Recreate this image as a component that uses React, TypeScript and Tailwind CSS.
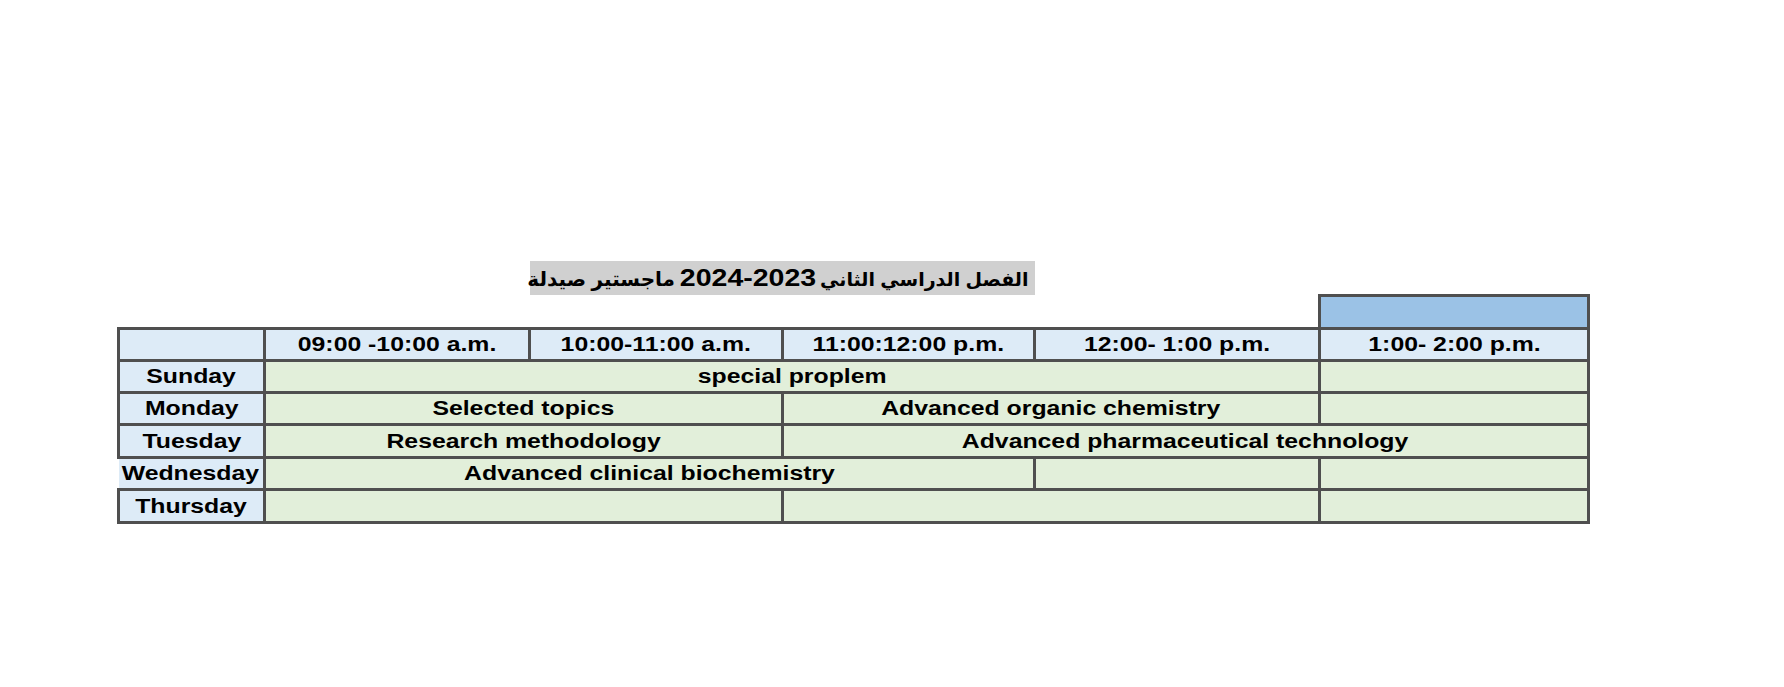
const border = "border-[3px] border-[#4f4f4f]";
const day = `${border} bg-[#ddebf7] text-center`;
const cell = `${border} bg-[#e2efda] text-center`;
const head = `${border} bg-[#ddebf7] text-center`;

function Txt({ children }: { children?: React.ReactNode }) {
  return <span className="inline-block scale-x-[1.24] whitespace-nowrap">{children}</span>;
}

const hours = ["09:00 -10:00 a.m.", "10:00-11:00 a.m.", "11:00:12:00 p.m.", "12:00- 1:00 p.m.", "1:00- 2:00 p.m."];

export default function App() {
  return (
    <div className="min-h-[687px] w-[1784px] bg-white pl-[117px] pt-[261px] font-['Liberation_Sans','DejaVu_Sans',sans-serif] text-[20px] font-bold text-black">
      <table className="w-[1470px] table-fixed border-collapse">
        <colgroup>
          <col className="w-[146px]" />
          <col className="w-[265px]" />
          <col className="w-[253px]" />
          <col className="w-[252px]" />
          <col className="w-[285px]" />
          <col className="w-[269px]" />
        </colgroup>
        <tbody>
          <tr className="h-[34px]">
            <td />
            <td />
            <td colSpan={2} className="overflow-visible bg-[#d0d0d0] p-0">
              <div dir="rtl" className="h-[34px] whitespace-nowrap pr-[6px] text-right leading-[34px]">
                <span className="text-[19px]">الفصل الدراسي الثاني</span>{" "}
                <span dir="ltr" className="mx-[12px] inline-block scale-x-[1.24] text-[23px] leading-[34px]">
                  2024-2023
                </span>{" "}
                ماجستير صيدلة
              </div>
            </td>
            <td />
            <td />
          </tr>
          <tr className="h-[33px]">
            <td colSpan={5} />
            <td className={`${border} bg-[#9bc2e6]`} />
          </tr>
          <tr className="h-[32px] leading-none">
            <td className={head} />
            {hours.map((h) => (
              <td key={h} className={head}>
                <Txt>{h}</Txt>
              </td>
            ))}
          </tr>
          <tr className="h-[32px] leading-none">
            <td className={day}><Txt>Sunday</Txt></td>
            <td colSpan={4} className={cell}><Txt>special proplem</Txt></td>
            <td className={cell} />
          </tr>
          <tr className="h-[32px] leading-none">
            <td className={day}><Txt>Monday</Txt></td>
            <td colSpan={2} className={cell}><Txt>Selected topics</Txt></td>
            <td colSpan={2} className={cell}><Txt>Advanced organic chemistry</Txt></td>
            <td className={cell} />
          </tr>
          <tr className="h-[33px] leading-none">
            <td className={day}><Txt>Tuesday</Txt></td>
            <td colSpan={2} className={cell}><Txt>Research methodology</Txt></td>
            <td colSpan={3} className={cell}><Txt>Advanced pharmaceutical technology</Txt></td>
          </tr>
          <tr className="h-[32px] leading-none">
            <td className="border-y-[3px] border-r-[3px] border-l-0 border-[#4f4f4f] bg-[#ddebf7] text-center"><Txt>Wednesday</Txt></td>
            <td colSpan={3} className={cell}><Txt>Advanced clinical biochemistry</Txt></td>
            <td className={cell} />
            <td className={cell} />
          </tr>
          <tr className="h-[33px] leading-none">
            <td className={day}><Txt>Thursday</Txt></td>
            <td colSpan={2} className={cell} />
            <td colSpan={2} className={cell} />
            <td className={cell} />
          </tr>
        </tbody>
      </table>
    </div>
  );
}
